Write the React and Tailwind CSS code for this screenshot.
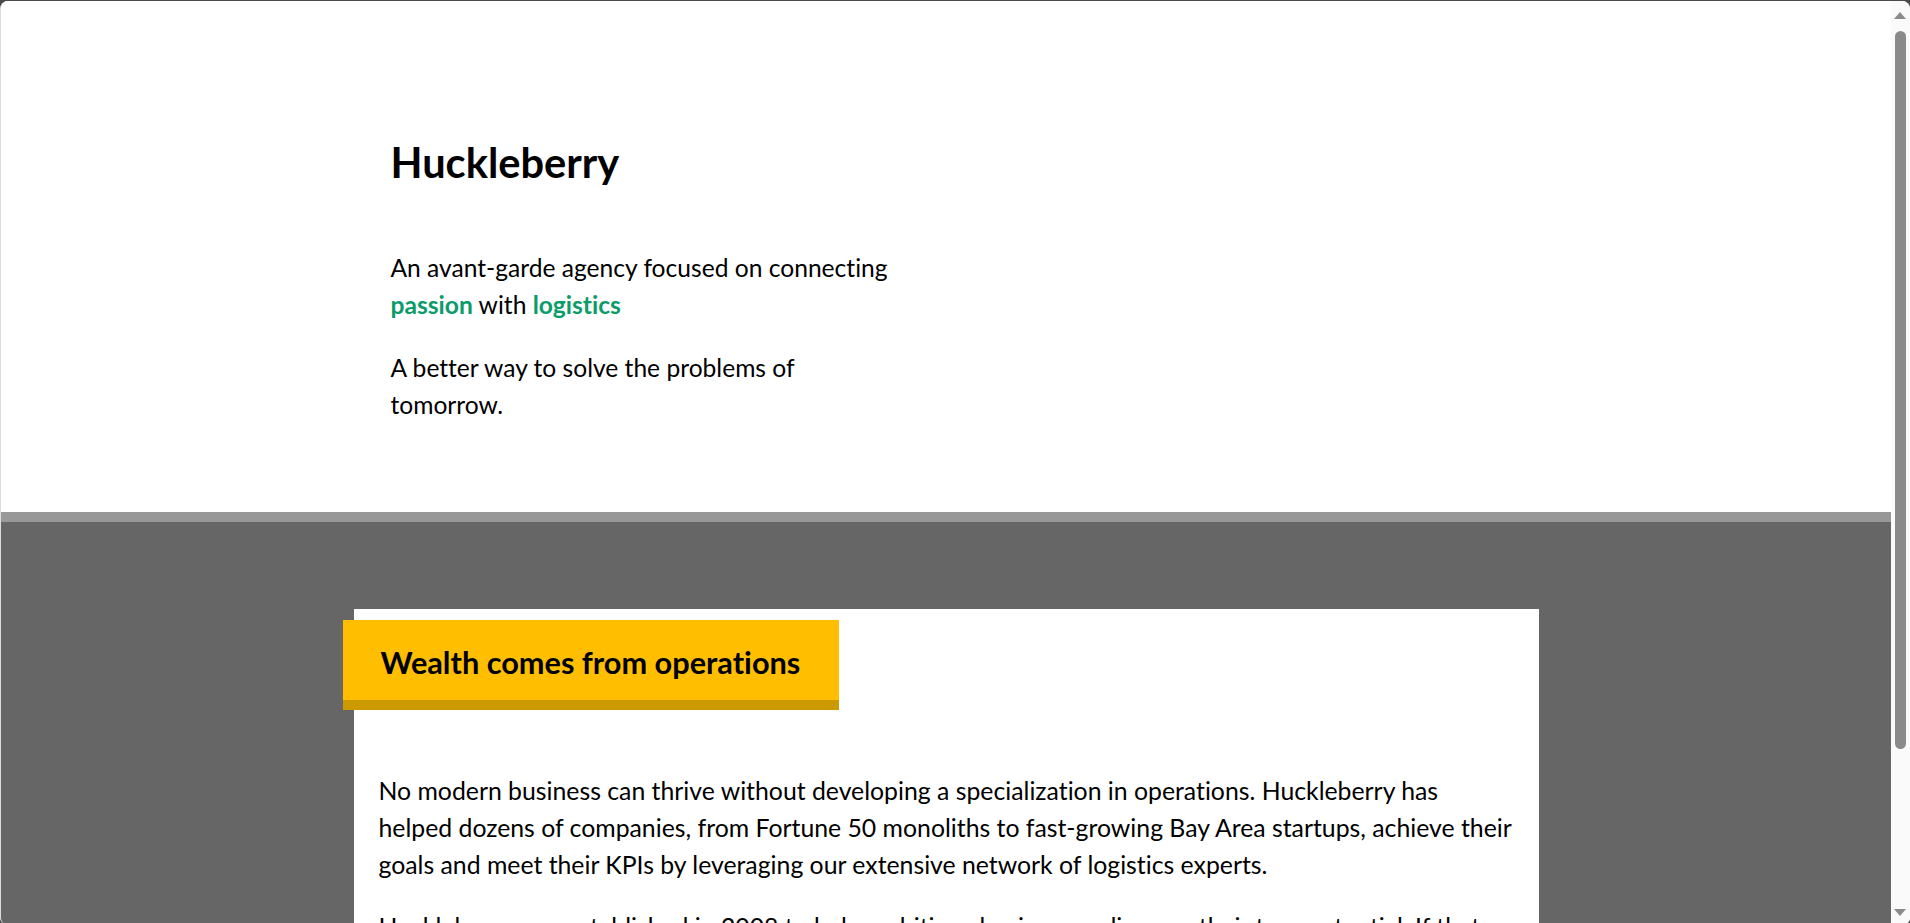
export default function App() {
  return (
    <div
      className="h-[923px] w-full bg-[#4b4b4b] overflow-hidden [font-variant-ligatures:none]"
      style={{ fontFamily: 'Lato, "Noto Sans", sans-serif' }}
    >
      <div className="flex h-full mt-[1px] rounded-t-[8px] rounded-b-[6px] overflow-hidden bg-white border-l border-[#dcdcdc]">
        {/* page */}
        <div className="flex-1 overflow-hidden text-black">
          <section className="h-[511px] bg-white">
            <div className="w-[1185px] mx-auto pl-[37px] pt-[137px]">
              <h1 className="text-[41.6px] leading-[1.2] font-bold">Huckleberry</h1>
              <div className="w-[510px] mt-[61px] text-[24.6px] leading-[37px]">
                <p>
                  An avant-garde agency focused on connecting{' '}
                  <span className="font-bold text-[#0c9c6a]">passion</span> with{' '}
                  <span className="font-bold text-[#0c9c6a]">logistics</span>
                </p>
                <p className="mt-[26px]">A better way to solve the problems of tomorrow.</p>
              </div>
            </div>
          </section>
          <div className="h-[10px] bg-[#989898]" />
          <section className="bg-[#666666] pt-[87px] pb-20">
            <div className="w-[1185px] mx-auto bg-white pt-[11px] pb-10">
              <div className="-ml-[11px] w-[496px] h-[90px] bg-[#ffbf00] border-b-[10px] border-[#cc9900] flex items-center px-[38px] pt-[7px]">
                <h2 className="text-[30.7px] leading-[1.2] font-bold whitespace-nowrap">Wealth comes from operations</h2>
              </div>
              <div className="pl-[25px] pr-[12px] text-[24.8px] leading-[37px]">
                <p className="mt-[62px]">
                  No modern business can thrive without developing a specialization in operations. Huckleberry has
                  <br />
                  helped dozens of companies, from Fortune 50 monoliths to fast-growing Bay Area startups, achieve their
                  <br />
                  goals and meet their KPIs by leveraging our extensive network of logistics experts.
                </p>
                <p className="mt-[25px] pr-[13px]">
                  Huckleberry was established in 2008 to help ambitious businesses discover their true potential. If that
                  sounds like you, we would love to hear from you and talk about what we can build together.
                </p>
              </div>
            </div>
          </section>
        </div>
        {/* scrollbar */}
        <div className="w-[19px] bg-[#fafafa] flex flex-col items-center pl-[3px] pr-[4px]">
          <svg width="12" height="8" viewBox="0 0 12 8" className="mt-[11px] shrink-0">
            <path d="M6 0 L12 7 L0 7 Z" fill="#8a8a8a" />
          </svg>
          <div className="mt-[11px] w-[11px] h-[718px] rounded-full bg-[#8a8a8a]" />
          <div className="flex-1" />
          <svg width="12" height="8" viewBox="0 0 12 8" className="mb-[8px] shrink-0">
            <path d="M0 1 L12 1 L6 8 Z" fill="#8a8a8a" />
          </svg>
        </div>
      </div>
    </div>
  );
}
